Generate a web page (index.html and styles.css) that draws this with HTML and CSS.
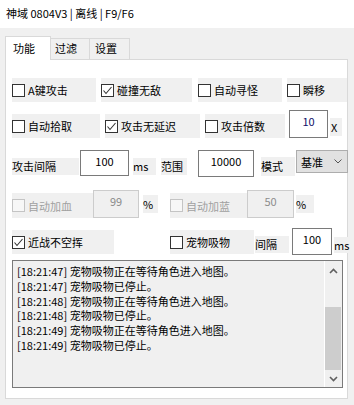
FILE: index.html
```html
<!DOCTYPE html>
<html lang="zh-CN">
<head>
  <meta charset="UTF-8" />
  <title>神域 0804V3</title>
  <link rel="stylesheet" href="styles.css">
</head>
<body>

<div class="titlebar">神域 0804V3 | 离线 | F9/F6</div>

<div class="tabs">
  <div class="tab active">功能</div>
  <div class="tab">过滤</div>
  <div class="tab">设置</div>
</div>

<div class="panel">

  <!-- row 1 -->
  <div class="row row1">
    <div class="chk w84"><span class="box"></span>A键攻击</div>
    <div class="chk w91 ml5 checked"><span class="box"><svg viewBox="0 0 11 11"><polyline points="1.5,5.5 4,8.5 9.5,2"/></svg></span>碰撞无敌</div>
    <div class="chk w84 ml6"><span class="box"></span>自动寻怪</div>
    <div class="chk w60 ml5"><span class="box"></span>瞬移</div>
  </div>

  <!-- row 2 -->
  <div class="row row2">
    <div class="chk w88"><span class="box"></span>自动拾取</div>
    <div class="chk w95 ml5 checked"><span class="box"><svg viewBox="0 0 11 11"><polyline points="1.5,5.5 4,8.5 9.5,2"/></svg></span>攻击无延迟</div>
    <div class="chk w80 ml5"><span class="box"></span>攻击倍数</div>
    <div class="field w39 ml4 h28 navy">10</div>
    <div class="lbl w12 ml2 x-lbl">X</div>
  </div>

  <!-- row 3 -->
  <div class="row row3">
    <div class="lbl w67 mt8">攻击间隔</div>
    <div class="field w49 ml1 h26">100</div>
    <div class="lbl w23 ml4 mt8">ms</div>
    <div class="lbl w26 ml5 mt8">范围</div>
    <div class="field w56 ml11 h27">10000</div>
    <div class="lbl w34 ml7 mt7 h19">模式</div>
    <div class="select w52 ml1">
      <span>基准</span>
      <svg class="caret" viewBox="0 0 8 5"><polyline points="0.5,0.5 4,4 7.5,0.5"/></svg>
    </div>
  </div>

  <!-- row 4 -->
  <div class="row row4">
    <div class="chk w81 mt3 h25 disabled"><span class="box"></span>自动加血</div>
    <div class="field w46 h28 disabled">99</div>
    <div class="lbl w15 ml4 mt5 h18">%</div>
    <div class="chk w77 ml12 mt3 h25 disabled"><span class="box"></span>自动加蓝</div>
    <div class="field w47 h28 disabled">50</div>
    <div class="lbl w18 ml2 mt5 h18">%</div>
  </div>

  <!-- row 5 -->
  <div class="row row5">
    <div class="chk w102 mt2 checked"><span class="box"><svg viewBox="0 0 11 11"><polyline points="1.5,5.5 4,8.5 9.5,2"/></svg></span>近战不空挥</div>
    <div class="chk w84 ml56 mt2"><span class="box"></span>宠物吸物</div>
    <div class="lbl w34 ml1 mt8">间隔</div>
    <div class="field w40 ml3 h27">100</div>
    <div class="lbl w16 ml2 mt9 h16">ms</div>
  </div>

  <!-- log -->
  <div class="log">
    <div class="log-text">
      <div>[18:21:47] 宠物吸物正在等待角色进入地图。</div>
      <div>[18:21:47] 宠物吸物已停止。</div>
      <div>[18:21:48] 宠物吸物正在等待角色进入地图。</div>
      <div>[18:21:48] 宠物吸物已停止。</div>
      <div>[18:21:49] 宠物吸物正在等待角色进入地图。</div>
      <div>[18:21:49] 宠物吸物已停止。</div>
    </div>
    <div class="scrollbar">
      <div class="arrow up"><svg viewBox="0 0 9 6"><polyline points="1,5 4.5,1.5 8,5"/></svg></div>
      <div class="track"><div class="thumb"></div></div>
      <div class="arrow down"><svg viewBox="0 0 9 6"><polyline points="1,1 4.5,4.5 8,1"/></svg></div>
    </div>
  </div>

</div>

</body>
</html>
```

FILE: styles.css
```css
* { box-sizing: border-box; }
body {
  margin: 0; width: 354px; height: 405px; overflow: hidden;
  background: #f0f0f0; color: #000;
  font-family: "Noto Sans CJK SC", "Noto Sans", sans-serif; font-size: 11px;
}

/* window title */
.titlebar { height: 28px; background: #fff; padding-left: 6px; line-height: 27px; }

/* tab strip */
.tabs {
  display: flex; align-items: flex-end;
  height: 24px; margin: 8px 0 -1px 5px;
  position: relative; z-index: 1;
}
.tab {
  width: 41px; height: 21px; margin-bottom: 1px; margin-left: -1px;
  padding-left: 5px; line-height: 19px;
  background: #f0f0f0; border: 1px solid #d9d9d9; border-bottom: none;
}
.tab.active {
  width: 46px; height: 24px; margin: 0; padding-left: 7px; line-height: 22px;
  background: #fff; position: relative; z-index: 2;
}
.tab.active + .tab { border-left: none; width: 40px; }

/* tab page */
.panel {
  height: 340px; margin: 0 6px 0 5px; padding: 18px 0 0 6px;
  background: #fff; border: 1px solid #d9d9d9;
}
.row { display: flex; align-items: flex-start; }
.row1 { height: 24px; }
.row2 { height: 28px; margin-top: 8px; align-items: flex-end; }
.row3 { height: 27px; margin-top: 12px; }
.row4 { height: 28px; margin-top: 13px; }
.row5 { height: 27px; margin-top: 10px; }

/* checkbox */
.chk {
  display: flex; align-items: center; flex: none;
  height: 24px; background: #f0f0f0; white-space: nowrap;
}
.box {
  width: 13px; height: 13px; margin-right: 3px; flex: none;
  border: 1px solid #333; background: #fff;
  display: flex; align-items: center; justify-content: center;
}
.box svg { width: 11px; height: 11px; fill: none; stroke: #333; stroke-width: 1.1; }
.chk.disabled { color: #a0a0a0; }
.chk.disabled .box { border-color: #c4c4c4; background: #f7f7f7; }

/* labels */
.lbl { flex: none; height: 17px; line-height: 17px; background: #f0f0f0; white-space: nowrap; }
.x-lbl { height: 18px; margin-bottom: 2px; line-height: 18px; padding-left: 1px; }

/* text boxes */
.field {
  flex: none; height: 26px; padding-top: 3px; line-height: 15px; text-align: center;
  background: #fff; border: 1px solid #7a7a7a;
}
.field.navy { color: #10106a; }
.field.disabled { background: #f0f0f0; border-color: #cccccc; color: #8c8c8c; }

/* combo box */
.select {
  flex: none; height: 23px; padding: 0 5px 0 4px;
  display: flex; align-items: center; justify-content: space-between;
  background: #e1e1e1; border: 1px solid #adadad;
}
.caret { width: 8px; height: 5px; fill: none; stroke: #555; stroke-width: 1; }

/* log box */
.log {
  display: flex; width: 331px; height: 128px; margin-top: 5px;
  background: #f0f0f0; border: 1px solid #7a7a7a;
}
.log-text { flex: 1; padding: 3px 0 0 4px; line-height: 14.8px; white-space: nowrap; overflow: hidden; }
.scrollbar {
  width: 17px; margin-right: 1px; flex: none;
  display: flex; flex-direction: column;
  border-left: 1px solid #fff;
}
.arrow { height: 17px; display: flex; align-items: center; justify-content: center; }
.arrow.up { padding-top: 2px; }
.arrow svg { width: 9px; height: 6px; fill: none; stroke: #606060; stroke-width: 1.6; }
.track { flex: 1; display: flex; flex-direction: column; }
.thumb { height: 63px; margin-top: auto; background: #cdcdcd; }

/* sizes */
.w12 { width: 12px; } .w15 { width: 15px; } .w16 { width: 16px; } .w18 { width: 18px; }
.w23 { width: 23px; } .w26 { width: 26px; } .w34 { width: 34px; } .w39 { width: 39px; }
.w40 { width: 40px; } .w46 { width: 46px; } .w47 { width: 47px; } .w49 { width: 49px; }
.w52 { width: 52px; } .w56 { width: 56px; } .w60 { width: 60px; } .w67 { width: 67px; }
.w77 { width: 77px; } .w80 { width: 80px; } .w81 { width: 81px; } .w84 { width: 84px; }
.w88 { width: 88px; } .w91 { width: 91px; } .w95 { width: 95px; } .w102 { width: 102px; }
.h16 { height: 16px; line-height: 16px; } .h18 { height: 18px; line-height: 18px; }
.h19 { height: 19px; line-height: 19px; } .h25 { height: 25px; }
.h26 { height: 26px; } .h27 { height: 27px; } .h28 { height: 28px; }
.ml1 { margin-left: 1px; } .ml2 { margin-left: 2px; } .ml3 { margin-left: 3px; }
.ml4 { margin-left: 4px; } .ml5 { margin-left: 5px; } .ml6 { margin-left: 6px; }
.ml7 { margin-left: 7px; } .ml11 { margin-left: 11px; } .ml12 { margin-left: 12px; }
.ml56 { margin-left: 56px; }
.mt2 { margin-top: 2px; } .mt3 { margin-top: 3px; } .mt5 { margin-top: 5px; }
.mt7 { margin-top: 7px; } .mt8 { margin-top: 8px; } .mt9 { margin-top: 9px; }
```
